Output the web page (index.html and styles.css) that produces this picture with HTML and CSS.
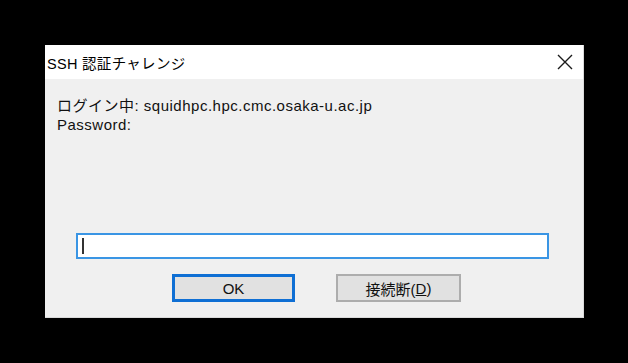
FILE: index.html
```html
<!DOCTYPE html>
<html lang="ja">
<head>
    <meta charset="UTF-8">
    <title>SSH 認証チャレンジ</title>
    <link rel="stylesheet" href="styles.css">
</head>
<body>
    <div class="dialog">
        <div class="titlebar">
            <span class="title">SSH 認証チャレンジ</span>
            <svg class="close" width="16" height="16" viewBox="0 0 16 16">
                <path d="M1 1 L15 15 M15 1 L1 15" stroke="#1a1a1a" stroke-width="1.4" fill="none"/>
            </svg>
        </div>
        <div class="content">
            <div class="message">
                <div>ログイン中: squidhpc.hpc.cmc.osaka-u.ac.jp</div>
                <div>Password:</div>
            </div>
            <div class="field"><span class="caret"></span></div>
            <div class="buttons">
                <div class="button default">OK</div>
                <div class="button">接続断(<u>D</u>)</div>
            </div>
        </div>
    </div>
</body>
</html>
```

FILE: styles.css
```css
body {
    margin: 0;
    padding: 0;
    background-color: #000;
    font-family: "Liberation Sans", "Noto Sans CJK JP", sans-serif;
    color: #111;
}
.dialog {
    width: 539px;
    height: 273px;
    margin: 45px 0 0 45px;
    background-color: #f0f0f0;
    display: flex;
    flex-direction: column;
    box-sizing: border-box;
    border-right: 1px solid #dadada;
    border-bottom: 1px solid #dadada;
}
.titlebar {
    height: 34px;
    background-color: #fff;
    display: flex;
    align-items: center;
    justify-content: space-between;
    padding: 0 10px 0 2px;
    flex-shrink: 0;
}
.title {
    font-size: 14.5px;
    letter-spacing: 0.3px;
    color: #000;
}
.close {
    display: block;
}
.content {
    flex: 1;
    display: flex;
    flex-direction: column;
    padding: 17px 0 0 12px;
}
.message {
    font-size: 15px;
    line-height: 19px;
    letter-spacing: 0.5px;
}
.field {
    width: 473px;
    height: 26px;
    box-sizing: border-box;
    margin: 99px 0 0 19px;
    background-color: #fff;
    border: 2px solid #3a95e4;
    display: flex;
    align-items: center;
    padding-left: 4px;
}
.caret {
    width: 2px;
    height: 16px;
    background-color: #333;
}
.buttons {
    display: flex;
    gap: 41px;
    margin: 15px 0 0 115px;
}
.button {
    width: 123px;
    height: 28px;
    box-sizing: border-box;
    background-color: #e1e1e1;
    border: 2px solid #adadad;
    display: flex;
    align-items: center;
    justify-content: center;
    font-size: 15px;
}
.button.default {
    border: 3px solid #0f6fd4;
}
.button:last-child {
    width: 125px;
}
```
